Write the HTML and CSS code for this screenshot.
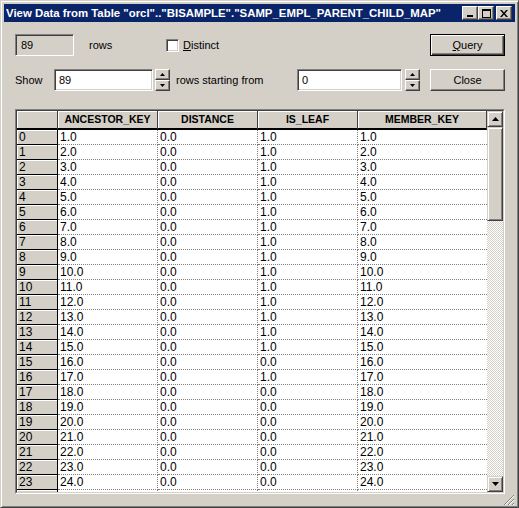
FILE: index.html
```html
<!DOCTYPE html>
<html>
<head>
<meta charset="utf-8">
<link rel="stylesheet" href="styles.css">
</head>
<body>
<div class="window">
  <div class="titlebar">
    <span class="title">View Data from Table "orcl".."BISAMPLE"."SAMP_EMPL_PARENT_CHILD_MAP"</span>
    <div class="tbtns">
      <div class="tbtn"><svg width="8" height="8" viewBox="0 0 8 8"><rect x="1" y="6" width="6" height="2" fill="#000"/></svg></div>
      <div class="tbtn"><svg width="9" height="9" viewBox="0 0 9 9"><rect x="0.5" y="0.5" width="8" height="8" fill="none" stroke="#000"/><rect x="0" y="1" width="9" height="1" fill="#000"/></svg></div>
      <div class="tbtn close"><svg width="8" height="7" viewBox="0 0 8 7"><path d="M0 0h2l2 2.5 2-2.5h2l-3 3.5 3 3.5h-2l-2-2.5-2 2.5h-2l3-3.5z" fill="#000"/></svg></div>
    </div>
  </div>
  <div class="content">
    <div class="row row1">
      <div class="countbox">89</div>
      <span class="lbl lbl-rows">rows</span>
      <div class="check"></div>
      <span class="lbl lbl-distinct"><u>D</u>istinct</span>
      <div class="btn default"><span><u>Q</u>uery</span></div>
    </div>
    <div class="row row2">
      <span class="lbl lbl-show">Show</span>
      <div class="input in-show">89</div>
      <div class="spin">
        <div class="sbtn"><svg width="5" height="3" viewBox="0 0 5 3"><path d="M2.5 0L5 3H0z" fill="#000"/></svg></div>
        <div class="sbtn"><svg width="5" height="3" viewBox="0 0 5 3"><path d="M0 0h5L2.5 3z" fill="#000"/></svg></div>
      </div>
      <span class="lbl lbl-start">rows starting from</span>
      <div class="input in-start">0</div>
      <div class="spin spin2">
        <div class="sbtn"><svg width="5" height="3" viewBox="0 0 5 3"><path d="M2.5 0L5 3H0z" fill="#000"/></svg></div>
        <div class="sbtn"><svg width="5" height="3" viewBox="0 0 5 3"><path d="M0 0h5L2.5 3z" fill="#000"/></svg></div>
      </div>
      <div class="btn"><span>Close</span></div>
    </div>
    <div class="gridframe">
      <div class="gridinner">
        <div class="grid" id="grid">
          <div class="hcell corner"></div>
          <div class="hcell">ANCESTOR_KEY</div>
          <div class="hcell">DISTANCE</div>
          <div class="hcell">IS_LEAF</div>
          <div class="hcell">MEMBER_KEY</div>
        </div>
        <div class="vscroll">
          <div class="sb-btn"><svg width="7" height="4" viewBox="0 0 7 4"><path d="M3.5 0L7 4H0z" fill="#000"/></svg></div>
          <div class="sb-thumb"></div>
          <div class="sb-track"></div>
          <div class="sb-btn"><svg width="7" height="4" viewBox="0 0 7 4"><path d="M0 0h7L3.5 4z" fill="#000"/></svg></div>
        </div>
      </div>
    </div>
    <div class="footer">
      <svg class="grip" width="12" height="12" viewBox="0 0 12 12">
        <path d="M11 1L1 11M11 5L5 11M11 9L9 11" stroke="#808080" stroke-width="1"/>
        <path d="M11 2L2 11M11 6L6 11M11 10L10 11" stroke="#fff" stroke-width="1"/>
      </svg>
    </div>
  </div>
</div>
<script>
  var leaf = [1,1,1,1,1,1,1,1,1,1,1,1,1,1,1,0,1,0,0,0,0,0,0,0];
  var g = document.getElementById('grid');
  var html = '';
  for (var i = 0; i < 24; i++) {
    var k = (i + 1) + '.0';
    html += '<div class="rcell">' + i + '</div>' +
      '<div class="dcell">' + k + '</div>' +
      '<div class="dcell">0.0</div>' +
      '<div class="dcell">' + leaf[i] + '.0</div>' +
      '<div class="dcell last">' + k + '</div>';
  }
  html += '<div class="rcell"></div><div class="dcell"></div><div class="dcell"></div><div class="dcell"></div><div class="dcell last"></div>';
  g.insertAdjacentHTML('beforeend', html);
</script>
</body>
</html>
```
FILE: styles.css
```css
html, body {
  margin: 0;
  padding: 0;
  background: #d4d0c8;
}
body {
  font-family: "Liberation Sans", Arial, sans-serif;
  font-size: 11px;
  color: #000;
}
.window {
  width: 519px;
  height: 508px;
  box-sizing: border-box;
  background: #d4d0c8;
  border: 1px solid;
  border-color: #d4d0c8 #404040 #404040 #d4d0c8;
  box-shadow: inset 1px 1px #fff, inset -1px -1px #808080;
  padding: 3px;
  display: flex;
  flex-direction: column;
}
.titlebar {
  height: 18px;
  background: #0a246a;
  display: flex;
  align-items: center;
  padding: 0 3px 0 2px;
  flex: none;
}
.title {
  color: #fff;
  font-weight: bold;
  font-size: 11.4px;
  white-space: nowrap;
  flex: 1;
  overflow: hidden;
}
.tbtns {
  display: flex;
  align-items: center;
}
.tbtn {
  width: 16px;
  height: 14px;
  box-sizing: border-box;
  background: #d4d0c8;
  border: 1px solid;
  border-color: #fff #404040 #404040 #fff;
  box-shadow: inset -1px -1px #808080;
  display: flex;
  align-items: center;
  justify-content: center;
}
.tbtn.close {
  margin-left: 2px;
}
.content {
  flex: 1;
  display: flex;
  flex-direction: column;
  padding: 0 10px 0 11px;
}
.row {
  display: flex;
  align-items: center;
  height: 22px;
  flex: none;
}
.row1 { margin-top: 12px; }
.row2 { margin-top: 13px; }
.lbl { white-space: nowrap; }
.countbox {
  width: 59px;
  height: 22px;
  box-sizing: border-box;
  border: 1px solid;
  border-color: #808080 #fff #fff #808080;
  box-shadow: inset 1px 1px #404040;
  padding: 3px 0 0 5px;
  line-height: 14px;
  color: #000;
}
.lbl-rows {
  width: 77px;
  margin-left: 15px;
}
.check {
  width: 13px;
  height: 13px;
  box-sizing: border-box;
  background: #fff;
  border: 1px solid;
  border-color: #808080 #fff #fff #808080;
  box-shadow: inset 1px 1px #404040, inset -1px -1px #d4d0c8;
}
.lbl-distinct {
  margin-left: 4px;
}
.btn {
  margin-left: auto;
  width: 75px;
  height: 22px;
  box-sizing: border-box;
  border: 1px solid;
  border-color: #fff #404040 #404040 #fff;
  box-shadow: inset -1px -1px #808080;
  display: flex;
  align-items: center;
  justify-content: center;
  font-size: 11px;
}
.btn.default {
  border: 1px solid #000;
  box-shadow: inset 1px 1px #fff, inset -1px -1px #404040, inset -2px -2px #808080;
}
.lbl-show { width: 39px; }
.input {
  height: 22px;
  box-sizing: border-box;
  background: #fff;
  border: 1px solid;
  border-color: #808080 #fff #fff #808080;
  box-shadow: inset 1px 1px #404040, inset -1px -1px #d4d0c8;
  padding: 3px 0 0 4px;
  line-height: 15px;
}
.in-show { width: 99px; }
.in-start { width: 105px; }
.spin {
  margin-left: 2px;
  width: 15px;
  height: 22px;
  display: flex;
  flex-direction: column;
  justify-content: space-between;
}
.spin2 { margin-left: 3px; }
.sbtn {
  height: 11px;
  box-sizing: border-box;
  background: #d4d0c8;
  border: 1px solid;
  border-color: #fff #404040 #404040 #fff;
  box-shadow: inset -1px -1px #808080;
  display: flex;
  align-items: center;
  justify-content: center;
}
.lbl-start {
  width: 121px;
  margin-left: 6px;
}
.gridframe {
  margin-top: 18px;
  height: 385px;
  box-sizing: border-box;
  border: 1px solid;
  border-color: #808080 #fff #fff #808080;
  flex: none;
}
.gridinner {
  height: 100%;
  box-sizing: border-box;
  border: 1px solid;
  border-color: #404040 #d4d0c8 #d4d0c8 #404040;
  display: flex;
  background: #fff;
}
.grid {
  flex: 1;
  overflow: hidden;
  display: grid;
  grid-template-columns: 41px 100px 100px 100px 1fr;
  grid-auto-rows: 15px;
  grid-template-rows: 19px;
  align-content: start;
}
.hcell {
  background: #d4d0c8;
  box-sizing: border-box;
  border-right: 1px solid #404040;
  border-bottom: 2px solid #000;
  box-shadow: inset 1px 1px #fff;
  font-weight: bold;
  font-size: 10.5px;
  text-align: center;
  line-height: 17px;
}
.rcell {
  background: #d4d0c8;
  box-sizing: border-box;
  border-right: 1px solid #000;
  border-bottom: 1px solid #000;
  box-shadow: inset 1px 1px #fff;
  padding-left: 2px;
  font-size: 12px;
  line-height: 14px;
}
.dcell {
  background: #fff;
  box-sizing: border-box;
  border-right: 1px dotted #808080;
  border-bottom: 1px dotted #808080;
  padding-left: 2px;
  font-size: 12px;
  line-height: 15px;
}
.dcell.last { border-right: none; }
.vscroll {
  width: 16px;
  flex: none;
  display: flex;
  flex-direction: column;
  background: #d4d0c8;
}
.sb-btn {
  height: 16px;
  flex: none;
  box-sizing: border-box;
  border: 1px solid;
  border-color: #d4d0c8 #404040 #404040 #d4d0c8;
  box-shadow: inset 1px 1px #fff, inset -1px -1px #808080;
  display: flex;
  align-items: center;
  justify-content: center;
}
.sb-thumb {
  height: 94px;
  flex: none;
  box-sizing: border-box;
  border: 1px solid;
  border-color: #d4d0c8 #404040 #404040 #d4d0c8;
  box-shadow: inset 1px 1px #fff, inset -1px -1px #808080;
}
.sb-track {
  flex: 1;
  background-color: #d4d0c8;
  background-image: repeating-conic-gradient(#fff 0 25%, #d4d0c8 0 50%);
  background-size: 2px 2px;
}
.footer {
  flex: 1;
  display: flex;
  justify-content: flex-end;
  align-items: flex-end;
  margin-right: -10px;
}
.grip {
  display: block;
}
```
